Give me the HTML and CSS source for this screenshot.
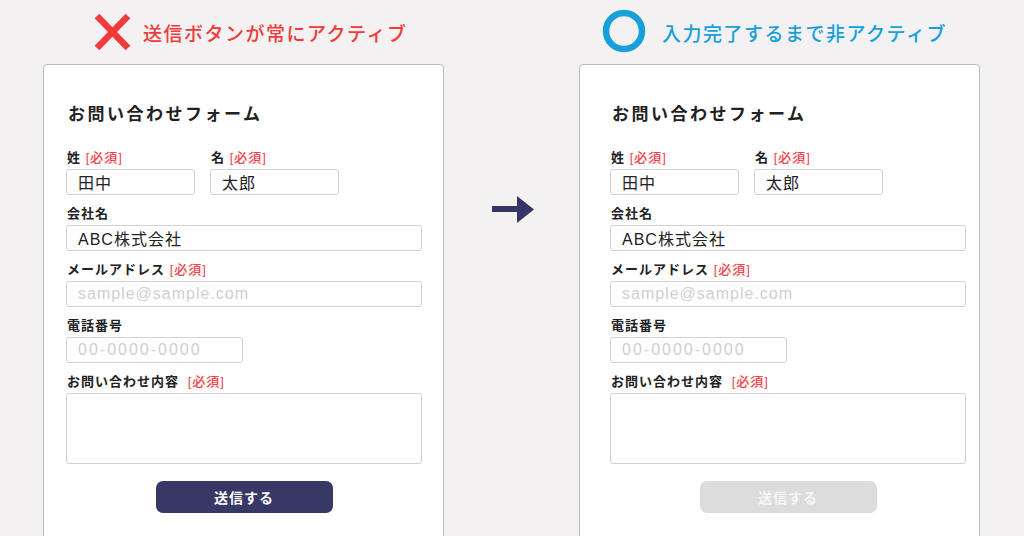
FILE: index.html
```html
<!DOCTYPE html>
<html lang="ja">
<head>
<meta charset="utf-8">
<title>送信ボタン比較</title>
<link rel="stylesheet" href="styles.css">
</head>
<body>
<div class="page">
  <section class="panel panel-bad">
    <div class="headline headline-bad">
      <svg class="mark" width="37" height="36" viewBox="0 0 37 36"><path d="M3 2 L34 34 M34 2 L3 34" stroke="#f23a3a" stroke-width="6.5" fill="none"/></svg>
      <span class="headline-text">送信ボタンが常にアクティブ</span>
    </div>
    <div class="card card-bad">
      <h1 class="form-title">お問い合わせフォーム</h1>
      <div class="row">
        <div class="field">
          <label class="label">姓 <span class="req">[必須]</span></label>
          <input class="input input-short" type="text" value="田中">
        </div>
        <div class="field">
          <label class="label">名 <span class="req">[必須]</span></label>
          <input class="input input-short" type="text" value="太郎">
        </div>
      </div>
      <div class="field">
        <label class="label">会社名</label>
        <input class="input input-wide" type="text" value="ABC株式会社">
      </div>
      <div class="field">
        <label class="label">メールアドレス <span class="req">[必須]</span></label>
        <input class="input input-wide" type="text" placeholder="sample@sample.com">
      </div>
      <div class="field">
        <label class="label">電話番号</label>
        <input class="input input-tel" type="text" placeholder="00-0000-0000">
      </div>
      <div class="field">
        <label class="label">お問い合わせ内容 <span class="req req-gap">[必須]</span></label>
        <textarea class="input textarea"></textarea>
      </div>
      <div class="actions">
        <button class="submit submit-active" type="button">送信する</button>
      </div>
    </div>
  </section>

  <div class="arrow-col">
    <svg width="44" height="30" viewBox="0 0 44 30"><rect x="0" y="10" width="27" height="6" fill="#363666"/><polygon points="25,0 42,13.5 25,27" fill="#363666"/></svg>
  </div>

  <section class="panel panel-good">
    <div class="headline headline-good">
      <svg class="mark" width="44" height="44" viewBox="0 0 44 44"><circle cx="22" cy="22" r="18" stroke="#17a0da" stroke-width="6.5" fill="none"/></svg>
      <span class="headline-text">入力完了するまで非アクティブ</span>
    </div>
    <div class="card card-good">
      <h1 class="form-title">お問い合わせフォーム</h1>
      <div class="row">
        <div class="field">
          <label class="label">姓 <span class="req">[必須]</span></label>
          <input class="input input-short" type="text" value="田中">
        </div>
        <div class="field">
          <label class="label">名 <span class="req">[必須]</span></label>
          <input class="input input-short" type="text" value="太郎">
        </div>
      </div>
      <div class="field">
        <label class="label">会社名</label>
        <input class="input input-wide" type="text" value="ABC株式会社">
      </div>
      <div class="field">
        <label class="label">メールアドレス <span class="req">[必須]</span></label>
        <input class="input input-wide" type="text" placeholder="sample@sample.com">
      </div>
      <div class="field">
        <label class="label">電話番号</label>
        <input class="input input-tel" type="text" placeholder="00-0000-0000">
      </div>
      <div class="field">
        <label class="label">お問い合わせ内容 <span class="req req-gap">[必須]</span></label>
        <textarea class="input textarea"></textarea>
      </div>
      <div class="actions">
        <button class="submit submit-disabled" type="button">送信する</button>
      </div>
    </div>
  </section>
</div>
</body>
</html>
```

FILE: styles.css
```css
* { box-sizing: border-box; }
html, body {
  margin: 0;
  padding: 0;
  background: #f3f1f2;
  overflow: hidden;
}
body {
  width: 1024px;
  height: 536px;
  font-family: "Liberation Sans", "Noto Sans CJK JP", sans-serif;
  color: #222;
}
.page {
  display: flex;
  padding-left: 43px;
}
.panel {
  width: 401px;
  display: flex;
  flex-direction: column;
}
.headline {
  height: 64px;
  display: flex;
  align-items: center;
}
.headline-bad { padding-left: 51px; gap: 12px; color: #f23a3a; }
.headline-good { padding-left: 23px; gap: 16px; color: #17a0da; }
.headline-good .mark { margin-top: -2px; }
.headline-text {
  font-size: 19px;
  font-weight: 500;
  letter-spacing: 1.5px;
}
.arrow-col {
  width: 135px;
  display: flex;
  justify-content: center;
  padding-top: 196px;
  padding-left: 4px;
}
.card {
  background: #fff;
  border: 1px solid #b9b9b9;
  border-radius: 4px;
  height: 520px;
  padding-top: 38px;
}
.card-bad { padding-left: 22px; }
.card-good { padding-left: 30px; }
.form-title {
  margin: 0 0 22px 2px;
  font-size: 17px;
  line-height: 24px;
  font-weight: 700;
  letter-spacing: 2.5px;
}
.row {
  display: flex;
  gap: 15px;
}
.field {
  display: flex;
  flex-direction: column;
  margin-bottom: 10px;
}
.label {
  font-size: 13px;
  line-height: 18px;
  font-weight: 700;
  letter-spacing: 1px;
  margin: 0 0 2px 1px;
}
.req {
  color: #f24248;
  font-weight: 500;
}
.req-gap { margin-left: 4px; }
.input {
  display: block;
  height: 26px;
  border: 1px solid #d2d2d2;
  border-radius: 3px;
  background: #fff;
  padding: 0 0 0 11px;
  font-family: "Liberation Sans", "Noto Sans CJK JP", sans-serif;
  font-size: 16px;
  letter-spacing: 1px;
  color: #222;
  outline: none;
  margin: 0;
}
.input::placeholder { color: #cfcfcf; }
.input-short { width: 129px; }
.input-wide { width: 356px; }
.input-tel { width: 177px; letter-spacing: 2px; }
.textarea {
  width: 356px;
  height: 71px;
  resize: none;
}
.actions {
  width: 356px;
  display: flex;
  justify-content: center;
  padding-top: 7px;
}
.submit {
  width: 177px;
  height: 32px;
  border: none;
  border-radius: 7px;
  font-family: "Liberation Sans", "Noto Sans CJK JP", sans-serif;
  font-size: 14px;
  font-weight: 700;
  letter-spacing: 1px;
  color: #fff;
}
.submit-active { background: #383867; }
.submit-disabled { background: #dcdcdc; color: #f6f6f6; }
```
